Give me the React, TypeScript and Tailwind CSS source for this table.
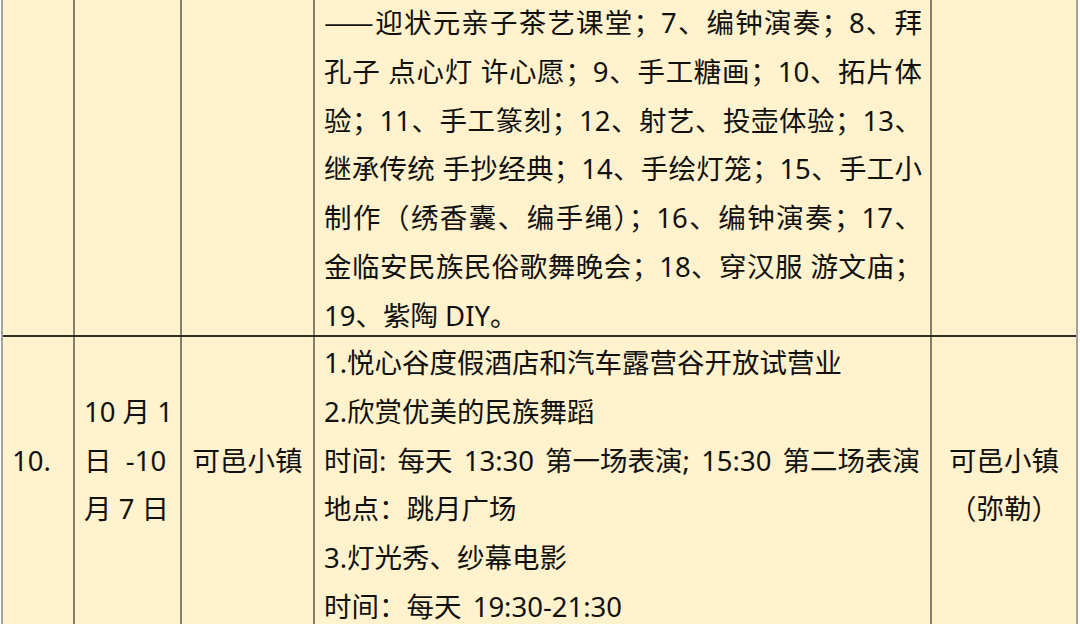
import React from 'react';

const topLines: React.ReactNode[] = [
  <>
    <span className="inline-block origin-left scale-x-[1.08] mr-[4px] font-['Noto_Sans_CJK_SC',sans-serif]">——</span>
    {'迎状元亲子茶艺课堂；7、编钟演奏；8、拜'}
  </>,
  '孔子 点心灯 许心愿；9、手工糖画；10、拓片体',
  '验；11、手工篆刻；12、射艺、投壶体验；13、',
  '继承传统 手抄经典；14、手绘灯笼；15、手工小',
  '制作（绣香囊、编手绳）；16、编钟演奏；17、',
  '金临安民族民俗歌舞晚会；18、穿汉服 游文庙；',
  '19、紫陶 DIY。',
];

const bottomLines = [
  '1.悦心谷度假酒店和汽车露营谷开放试营业',
  '2.欣赏优美的民族舞蹈',
  '时间: 每天 13:30 第一场表演; 15:30 第二场表演',
  '地点：跳月广场',
  '3.灯光秀、纱幕电影',
  '时间：每天 19:30-21:30',
];

const Spacer: React.FC<{ lines: number }> = ({ lines }) => (
  <>
    {Array.from({ length: lines }).map((_, i) => (
      <div key={i}>&nbsp;</div>
    ))}
  </>
);

const cell = 'border-r-2 border-[#857f6e] overflow-hidden';

const App: React.FC = () => {
  return (
    <div className="w-[1080px] h-[624px] overflow-hidden bg-white">
      <div className="ml-px w-[1077px] h-[624px] border-x-2 border-[#a3a19c] bg-[#fff2cc] text-[#111111] text-[27.5px] leading-[48.8px] font-['Noto_Sans','Noto_Sans_CJK_SC',sans-serif] whitespace-nowrap">
        {/* row 9, continued from the previous page */}
        <div className="grid grid-cols-[72px_107px_133px_617px_144px] h-[335px]">
          <div className={cell} />
          <div className={cell} />
          <div className={cell} />
          <div className={cell}>
            <div className="-mt-[3px] pl-[9px] pr-[8px]">
              {topLines.map((line, i) => (
                <div
                  key={i}
                  className={i < topLines.length - 1 ? 'text-justify [text-align-last:justify]' : ''}
                >
                  {line}
                </div>
              ))}
            </div>
          </div>
          <div className="overflow-hidden" />
        </div>

        {/* row 10 */}
        <div className="grid grid-cols-[72px_107px_133px_617px_144px] h-[289px] border-t-2 border-[#2f2c25]">
          <div className={cell}>
            <div className="pt-[2px] pl-[9px]">
              <Spacer lines={2} />
              <div>10.</div>
            </div>
          </div>
          <div className={cell}>
            <div className="pt-[2px] pl-[9px]">
              <Spacer lines={1} />
              <div>10 月 1</div>
              <div>日&nbsp; -10</div>
              <div>月 7 日</div>
            </div>
          </div>
          <div className={cell}>
            <div className="pt-[2px] text-center">
              <Spacer lines={2} />
              <div>可邑小镇</div>
            </div>
          </div>
          <div className={cell}>
            <div className="pt-[2px] pl-[9px] [word-spacing:4px]">
              {bottomLines.map((line, i) => (
                <div key={i}>{line}</div>
              ))}
            </div>
          </div>
          <div className="overflow-hidden pt-[2px] text-center">
            <Spacer lines={2} />
            <div>可邑小镇</div>
            <div>（弥勒）</div>
          </div>
        </div>
      </div>
    </div>
  );
};

export default App;
